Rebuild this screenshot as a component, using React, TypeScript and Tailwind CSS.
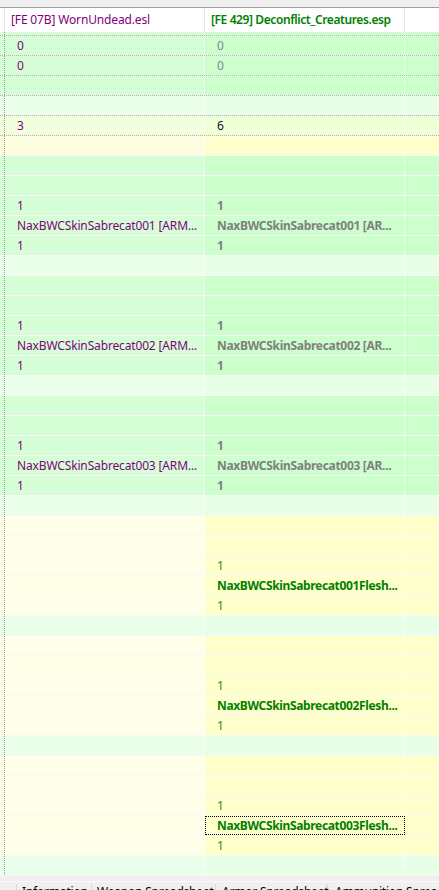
import cn from "clsx";

type Tone = "a" | "b" | "c" | "d" | "e";
type Ink = "g0" | "dk" | "gb" | "gn" | "gnb";

const tones: Record<Tone, { c1: string; c2: string }> = {
  a: { c1: "bg-[#d6fed6]", c2: "bg-[#ccffcc]" },
  b: { c1: "bg-[#eaffea]", c2: "bg-[#e6ffe6]" },
  c: { c1: "bg-[#f2ffdc]", c2: "bg-[#efffd6]" },
  d: { c1: "bg-[#fdfde0]", c2: "bg-[#ffffcc]" },
  e: { c1: "bg-[#ffffe9]", c2: "bg-[#ffffcc]" },
};

const inks: Record<Ink, string> = {
  g0: "text-[#808888]",
  dk: "text-[#101038]",
  gb: "text-[#808080] font-bold tracking-[-0.3px]",
  gn: "text-[#3a8a08]",
  gnb: "text-[#008000] font-bold tracking-[-0.35px]",
};

interface Row {
  tone: Tone;
  a?: string;
  b?: string;
  ink?: Ink;
  focus?: boolean;
}

// one block of the sabrecat armour entries
const armo = (n: string): Row[] => [
  { tone: "a" },
  { tone: "a" },
  { tone: "a", a: "1", b: "1", ink: "gb" },
  { tone: "a", a: `NaxBWCSkinSabrecat${n} [ARM...`, b: `NaxBWCSkinSabrecat${n} [AR...`, ink: "gb" },
  { tone: "a", a: "1", b: "1", ink: "gb" },
  { tone: "b" },
];

const flesh = (n: string, focus = false): Row[] => [
  { tone: "e" },
  { tone: "e" },
  { tone: "e", b: "1", ink: "gn" },
  { tone: "e", b: `NaxBWCSkinSabrecat${n}Flesh...`, ink: "gnb", focus },
  { tone: "e", b: "1", ink: "gn" },
  { tone: "b" },
];

const rows: Row[] = [
  { tone: "a", a: "0", b: "0", ink: "g0" },
  { tone: "a", a: "0", b: "0", ink: "g0" },
  { tone: "a" },
  { tone: "b" },
  { tone: "c", a: "3", b: "6", ink: "dk" },
  { tone: "d" },
  ...armo("001"),
  ...armo("002"),
  ...armo("003"),
  ...flesh("001"),
  ...flesh("002"),
  ...flesh("003", true),
];

function GridRow({ row, index }: { row: Row; index: number }) {
  const t = tones[row.tone];
  const line = index < 5 ? "border-[#b4b4b4]" : "border-white";
  return (
    <div className={cn("flex h-[20px] border-b border-dotted", line)}>
      <div className={cn("w-[5px] shrink-0 border-r border-dotted border-[#9a9a9a]", t.c1)} />
      <div
        className={cn(
          "flex w-[200px] shrink-0 items-center overflow-hidden whitespace-nowrap border-r border-dotted border-white pl-[12px] tracking-[-0.15px] text-[#800080]",
          t.c1
        )}
      >
        {row.a}
      </div>
      <div
        className={cn(
          "flex w-[200px] shrink-0 items-center overflow-hidden whitespace-nowrap border-r border-dotted border-white pl-[12px]",
          t.c2,
          row.ink && inks[row.ink],
          row.focus && "outline outline-1 outline-dotted outline-black -outline-offset-1"
        )}
      >
        {row.b}
      </div>
      <div className={cn("flex-1", t.c2)} />
    </div>
  );
}

export default function App() {
  return (
    <div className="flex h-[890px] w-[439px] flex-col overflow-hidden bg-[#f0f0f0] font-['Noto_Sans',sans-serif] text-[12px] leading-none">
      <div className="h-[7px] shrink-0 bg-[#f0f0f0]" />
      <div className="h-px shrink-0 bg-[#a0a0a0]" />

      {/* column header */}
      <div className="flex h-[24px] shrink-0 bg-white">
        <div className="w-[5px] shrink-0 border-r border-[#e5e5e5]" />
        <div className="flex w-[200px] shrink-0 items-center border-r border-[#e5e5e5] pl-[6px] tracking-[-0.15px] text-[#800080]">
          [FE 07B] WornUndead.esl
        </div>
        <div className="flex w-[200px] shrink-0 items-center overflow-hidden whitespace-nowrap border-r border-[#e5e5e5] pl-[6px] font-semibold tracking-[-0.4px] text-[#008000]">
          [FE 429] Deconflict_Creatures.esp
        </div>
        <div className="flex-1" />
      </div>

      {/* partly scrolled row above the first full one */}
      <div className="flex h-[4px] shrink-0 border-b border-dotted border-[#b4b4b4]">
        <div className="w-[5px] border-r border-dotted border-[#9a9a9a] bg-[#d6fed6]" />
        <div className="w-[200px] border-r border-dotted border-white bg-[#d6fed6]" />
        <div className="w-[200px] border-r border-dotted border-white bg-[#ccffcc]" />
        <div className="flex-1 bg-[#ccffcc]" />
      </div>

      <div className="shrink-0">
        {rows.map((r, i) => (
          <GridRow key={i} row={r} index={i} />
        ))}
      </div>

      <div className="h-[5px] shrink-0" />
      <div className="h-px shrink-0 bg-[#fbfbfb]" />

      {/* page tabs, cut by the window edge */}
      <div className="flex h-[8px] shrink-0 overflow-hidden whitespace-nowrap pt-[2px] leading-[16px] tracking-[-0.2px] text-black">
        <div className="w-[17px] shrink-0 overflow-hidden border-r border-[#d9d9d9]" />
        <div className="w-[75px] shrink-0 border-r border-[#d9d9d9] pl-[5px]">Information</div>
        <div className="w-[124px] shrink-0 border-r border-[#d9d9d9] pl-[5px]">Weapon Spreadsheet</div>
        <div className="w-[112px] shrink-0 border-r border-[#d9d9d9] pl-[6px]">Armor Spreadsheet</div>
        <div className="flex-1 pl-[7px]">Ammunition Spreadsheet</div>
      </div>
    </div>
  );
}
